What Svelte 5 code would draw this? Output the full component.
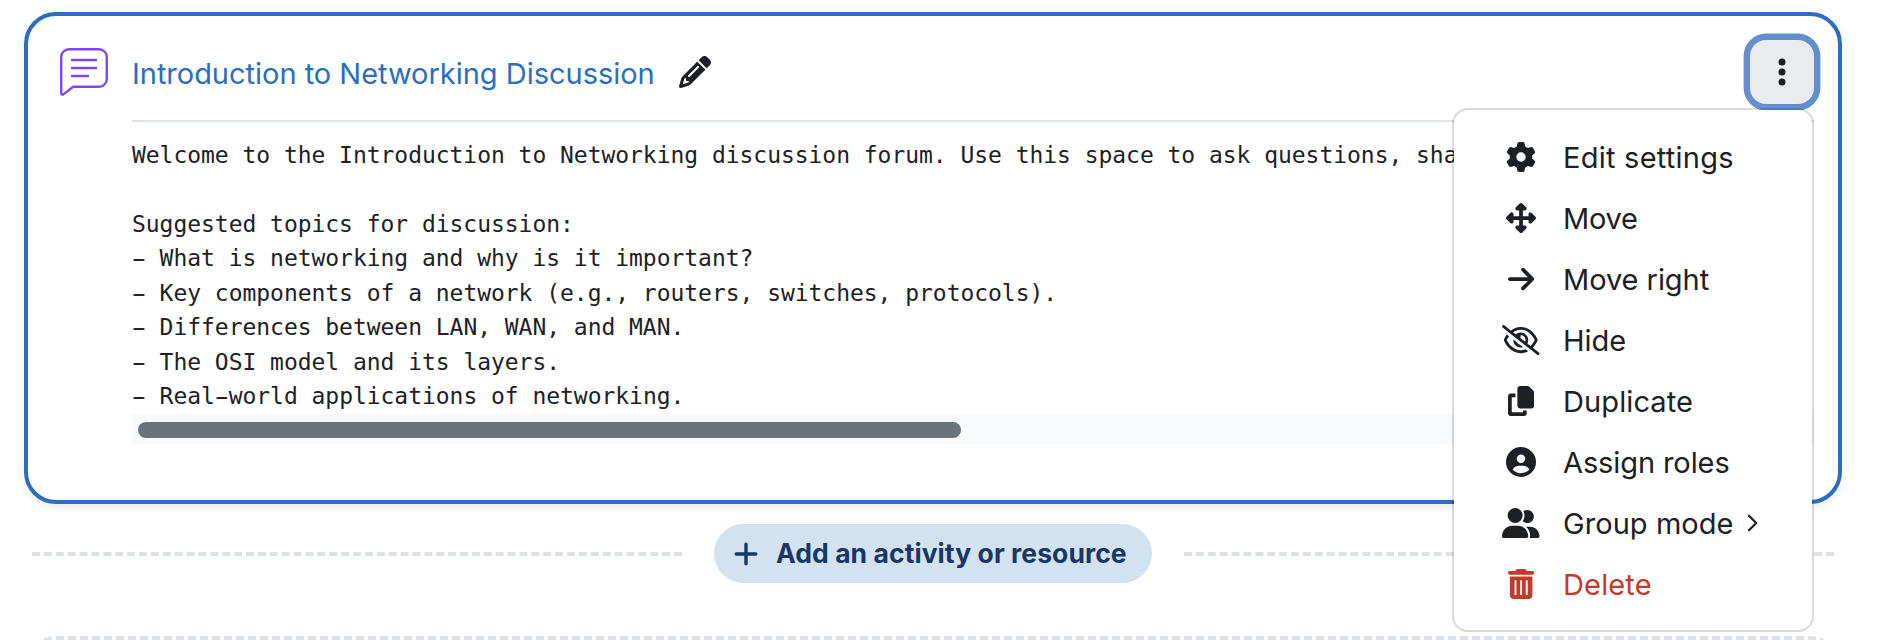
<script>
  const items = [
    { label: 'Edit settings', w: 512, track: 0.25, d: 'M495.9 166.6c3.2 8.7 .5 18.4-6.4 24.6l-43.3 39.4c1.1 8.3 1.7 16.8 1.7 25.4s-.6 17.1-1.7 25.4l43.3 39.4c6.9 6.2 9.6 15.9 6.4 24.6c-4.4 11.9-9.7 23.3-15.8 34.3l-4.7 8.1c-6.6 11-14 21.4-22.1 31.2c-5.9 7.2-15.7 9.6-24.5 6.8l-55.7-17.7c-13.4 10.3-28.2 18.9-44 25.4l-12.5 57.1c-2 9.1-9 16.3-18.2 17.8c-13.8 2.3-28 3.5-42.5 3.5s-28.7-1.2-42.5-3.5c-9.2-1.5-16.2-8.7-18.2-17.8l-12.5-57.1c-15.8-6.5-30.6-15.1-44-25.4L83.1 425.9c-8.8 2.8-18.6 .3-24.5-6.8c-8.1-9.8-15.5-20.2-22.1-31.2l-4.7-8.1c-6.1-11-11.4-22.4-15.8-34.3c-3.2-8.7-.5-18.4 6.4-24.6l43.3-39.4C64.6 273.1 64 264.6 64 256s.6-17.1 1.7-25.4L22.4 191.2c-6.9-6.2-9.6-15.9-6.4-24.6c4.4-11.9 9.7-23.3 15.8-34.3l4.7-8.1c6.6-11 14-21.4 22.1-31.2c5.9-7.2 15.7-9.6 24.5-6.8l55.7 17.7c13.4-10.3 28.2-18.9 44-25.4l12.5-57.1c2-9.1 9-16.3 18.2-17.8C227.3 1.2 241.5 0 256 0s28.7 1.2 42.5 3.5c9.2 1.5 16.2 8.7 18.2 17.8l12.5 57.1c15.8 6.5 30.6 15.1 44 25.4l55.7-17.7c8.8-2.8 18.6-.3 24.5 6.8c8.1 9.8 15.5 20.2 22.1 31.2l4.7 8.1c6.1 11 11.4 22.4 15.8 34.3zM256 336a80 80 0 1 0 0-160 80 80 0 1 0 0 160z' },
    { label: 'Move', w: 512, track: -0.25, d: 'M278.6 9.4c-12.5-12.5-32.8-12.5-45.3 0l-64 64c-9.2 9.2-11.9 22.9-6.9 34.9s16.6 19.8 29.6 19.8h32v96H128V192c0-12.9-7.8-24.6-19.8-29.6s-25.7-2.2-34.9 6.9l-64 64c-12.5 12.5-12.5 32.8 0 45.3l64 64c9.2 9.2 22.9 11.9 34.9 6.9s19.8-16.6 19.8-29.6V288h96v96H192c-12.9 0-24.6 7.8-29.6 19.8s-2.2 25.7 6.9 34.9l64 64c12.5 12.5 32.8 12.5 45.3 0l64-64c9.2-9.2 11.9-22.9 6.9-34.9s-16.6-19.8-29.6-19.8H288V288h96v32c0 12.9 7.8 24.6 19.8 29.6s25.7 2.2 34.9-6.9l64-64c12.5-12.5 12.5-32.8 0-45.3l-64-64c-9.2-9.2-22.9-11.9-34.9-6.9s-19.8 16.6-19.8 29.6v32H288V128h32c12.9 0 24.6-7.8 29.6-19.8s2.2-25.7-6.9-34.9l-64-64z' },
    { label: 'Move right', w: 448, track: -0.05, d: 'M438.6 278.6c12.5-12.5 12.5-32.8 0-45.3l-160-160c-12.5-12.5-32.8-12.5-45.3 0s-12.5 32.8 0 45.3L338.8 224 32 224c-17.7 0-32 14.3-32 32s14.3 32 32 32l306.7 0L233.4 393.4c-12.5 12.5-12.5 32.8 0 45.3s32.8 12.5 45.3 0l160-160z' },
    { label: 'Hide', w: 640, track: 0, d: 'M38.8 5.1C28.4-3.1 13.3-1.2 5.1 9.2S-1.2 34.7 9.2 42.9l592 464c10.4 8.2 25.5 6.3 33.7-4.1s6.3-25.5-4.1-33.7L525.6 386.7c39.6-40.6 66.4-86.1 79.9-118.4c3.3-7.9 3.3-16.7 0-24.6c-14.9-35.7-46.2-87.7-93-131.1C465.5 68.8 400.8 32 320 32c-68.2 0-125 26.3-169.3 60.8L38.8 5.1zm151 118.3C226 97.7 269.5 80 320 80c65.2 0 118.8 29.6 159.9 67.7C518.4 183.5 545 226 558.6 256c-12.6 28-36.6 66.8-70.9 100.9l-53.8-42.2c9.1-17.6 14.2-37.5 14.2-58.7c0-70.7-57.3-128-128-128c-32.2 0-61.7 11.9-84.2 31.5l-46.1-36.1zM394.9 284.2l-81.5-63.9c4.2-8.5 6.6-18.2 6.6-28.3c0-5.5-.7-10.9-2-16c.7 0 1.3 0 2 0c44.2 0 80 35.8 80 80c0 9.9-1.8 19.4-5.1 28.2zm9.4 130.3C378.8 425.4 350.7 432 320 432c-65.2 0-118.8-29.6-159.9-67.7C121.6 328.5 95 286 81.4 256c8.3-18.4 21.5-41.5 39.4-64.8L83.1 161.5C60.3 191.2 44 220.8 34.5 243.7c-3.3 7.9-3.3 16.7 0 24.6c14.9 35.7 46.2 87.7 93 131.1C174.5 443.2 239.2 480 320 480c47.8 0 89.9-12.9 126.2-32.5l-41.9-33zM192 256c0 70.7 57.3 128 128 128c13.3 0 26.1-2 38.2-5.8L302 334c-23.5-5.4-43.1-21.2-53.7-42.3l-56.1-44.2c-.2 2.8-.3 5.6-.3 8.5z' },
    { label: 'Duplicate', w: 448, track: 0.1, d: 'M208 0L332.1 0c12.7 0 24.9 5.1 33.9 14.1l67.9 67.9c9 9 14.1 21.2 14.1 33.9L448 336c0 26.5-21.5 48-48 48l-192 0c-26.5 0-48-21.5-48-48l0-288c0-26.5 21.5-48 48-48zM48 128l80 0 0 64-64 0 0 256 192 0 0-32 64 0 0 48c0 26.5-21.5 48-48 48L48 512c-26.5 0-48-21.5-48-48L0 176c0-26.5 21.5-48 48-48z' },
    { label: 'Assign roles', w: 512, track: -0.1, d: 'M399 384.2C376.9 345.8 335.4 320 288 320H224c-47.4 0-88.9 25.8-111 64.2c35.2 39.2 86.2 63.8 143 63.8s107.8-24.7 143-63.8zM0 256a256 256 0 1 1 512 0A256 256 0 1 1 0 256zm256 16a72 72 0 1 0 0-144 72 72 0 1 0 0 144z' },
    { label: 'Group mode', w: 640, track: 0.06, sub: true, d: 'M96 128a128 128 0 1 1 256 0A128 128 0 1 1 96 128zM0 482.3C0 383.8 79.8 304 178.3 304h91.4C368.2 304 448 383.8 448 482.3c0 16.4-13.3 29.7-29.7 29.7H29.7C13.3 512 0 498.7 0 482.3zM609.3 512H471.4c5.4-9.4 8.6-20.3 8.6-32v-8c0-60.7-27.1-115.2-69.8-151.8c2.4-.1 4.7-.2 7.1-.2h61.4C567.8 320 640 392.2 640 481.3c0 17-13.8 30.7-30.7 30.7zM432 256c-31 0-59-12.6-79.3-32.9C372.4 196.5 384 163.6 384 128c0-26.8-6.6-52.1-18.3-74.3C384.3 40.1 407.2 32 432 32c61.9 0 112 50.1 112 112s-50.1 112-112 112z' },
    { label: 'Delete', w: 448, track: 0.15, danger: true, d: 'M135.2 17.7C140.6 6.8 151.7 0 163.8 0H284.2c12.1 0 23.2 6.8 28.6 17.7L320 32h96c17.7 0 32 14.3 32 32s-14.3 32-32 32H32C14.3 96 0 81.7 0 64S14.3 32 32 32h96l7.2-14.3zM32 128H416V448c0 35.3-28.7 64-64 64H96c-35.3 0-64-28.7-64-64V128zm96 64c-8.8 0-16 7.2-16 16V432c0 8.8 7.2 16 16 16s16-7.2 16-16V208c0-8.8-7.2-16-16-16zm96 0c-8.8 0-16 7.2-16 16V432c0 8.8 7.2 16 16 16s16-7.2 16-16V208c0-8.8-7.2-16-16-16zm96 0c-8.8 0-16 7.2-16 16V432c0 8.8 7.2 16 16 16s16-7.2 16-16V208c0-8.8-7.2-16-16-16z' },
  ];

  const lines = [
    'Welcome to the Introduction to Networking discussion forum. Use this space to ask questions, share',
    '',
    'Suggested topics for discussion:',
    '- What is networking and why is it important?',
    '- Key components of a network (e.g., routers, switches, protocols).',
    '- Differences between LAN, WAN, and MAN.',
    '- The OSI model and its layers.',
    '- Real-world applications of networking.',
  ];
</script>

<main class="page">
  <section class="card">
    <header class="head">
      <svg class="forum" viewBox="0 0 48 48" fill="none" stroke="#7b48ff" stroke-width="2.4" stroke-linecap="round" stroke-linejoin="round">
        <path d="M9 1.2H39a7.8 7.8 0 0 1 7.8 7.8V31a7.8 7.8 0 0 1-7.8 7.8H13.2L3.3 46.4A1.4 1.4 0 0 1 1.2 45.3V9A7.8 7.8 0 0 1 9 1.2z" />
        <path d="M12 12H36M12 20H36M12 28H28" />
      </svg>
      <a class="title" href="#discussion">Introduction to Networking Discussion</a>
      <svg class="pencil" viewBox="0 0 512 512"><path d="M410.3 231l11.3-11.3-33.9-33.9-62.1-62.1L291.7 89.8l-11.3 11.3-22.6 22.6L58.6 322.9c-10.4 10.4-18 23.3-22.2 37.4L1 480.7c-2.5 8.4-.2 17.5 6.1 23.7s15.3 8.5 23.7 6.1l120.3-35.4c14.1-4.2 27-11.8 37.4-22.2L387.7 253.7 410.3 231zM160 399.4l-9.1 22.7c-4 3.1-8.5 5.4-13.3 6.9L59.4 452l23-78.1c1.4-4.9 3.8-9.4 6.9-13.3l22.7-9.1v32c0 8.8 7.2 16 16 16h32zM362.7 18.7L348.3 33.2 325.7 55.8 314.3 67.1l33.9 33.9 62.1 62.1 33.9 33.9 11.3-11.3 22.6-22.6 14.5-14.5c25-25 25-65.5 0-90.5L453.3 18.7c-25-25-65.5-25-90.5 0zm-47.4 168l-144 144c-6.2 6.2-16.4 6.2-22.6 0s-6.2-16.4 0-22.6l144-144c6.2-6.2 16.4-6.2 22.6 0s6.2 16.4 0 22.6z" /></svg>
      <div class="actions">
        <button class="kebab" aria-expanded="true">
          <svg viewBox="0 0 128 512"><circle cx="64" cy="96" r="56" /><circle cx="64" cy="256" r="56" /><circle cx="64" cy="416" r="56" /></svg>
        </button>
        <div class="menu">
          {#each items as item}
            <div class="item" class:danger={item.danger}>
              <span class="slot"><svg viewBox="0 0 {item.w} 512" width={(item.w * 30) / 512} height="30"><path d={item.d} /></svg></span>
              <span class="label" style="letter-spacing: {item.track}px">{item.label}</span>
              {#if item.sub}
                <svg class="chevron" viewBox="0 0 12 18" fill="none" stroke="#1d2125" stroke-width="2.3" stroke-linecap="round" stroke-linejoin="round"><path d="M2 1.8L9.2 9L2 16.2" /></svg>
              {/if}
            </div>
          {/each}
        </div>
      </div>
    </header>
    <div class="body">
      <div class="code">
        {#each lines as line}
          <div class="line">{#each line.split(/(-)/) as part}{#if part === '-'}<span class="dash">-</span>{:else}{part}{/if}{/each}</div>
        {/each}
      </div>
      <div class="track"><div class="thumb"></div></div>
    </div>
  </section>

  <div class="divider">
    <span class="rule"></span>
    <button class="add">
      <svg viewBox="0 0 24 24" fill="none" stroke="#183863" stroke-width="3.4" stroke-linecap="round"><path d="M12 2.2V21.8M2.2 12H21.8" /></svg>
      <span>Add an activity or resource</span>
    </button>
    <span class="rule"></span>
  </div>

  <section class="next"></section>
</main>

<style>
  :global(body) {
    background: #fff;
    overflow: hidden;
  }
  .page {
    box-sizing: border-box;
    height: 640px;
    overflow: hidden;
    padding: 12px 38px 0 24px;
    font-family: Inter, sans-serif;
    color: #1d2125;
  }
  .card {
    box-sizing: border-box;
    height: 492px;
    border: 4px solid #2c6dbc;
    border-radius: 32px;
    padding: 24px 24px 0 32px;
    box-shadow: 0 4px 8px rgba(0, 0, 0, 0.075);
  }
  .head {
    display: flex;
    align-items: flex-start;
    height: 80px;
  }
  .forum {
    width: 48px;
    height: 48px;
    margin-top: 8px;
  }
  .title {
    margin: 11px 0 0 24px;
    font-size: 29px;
    line-height: 45px;
    letter-spacing: -0.02px;
    color: #2c6dbc;
    text-decoration: none;
    white-space: nowrap;
    width: 522px;
  }
  .pencil {
    width: 32px;
    height: 32px;
    margin: 16px 0 0 24.5px;
    fill: #1d2125;
  }
  .actions {
    position: relative;
    margin-left: auto;
  }
  .kebab {
    display: flex;
    align-items: center;
    justify-content: center;
    width: 64px;
    height: 64px;
    border: 0;
    padding: 0;
    border-radius: 16px;
    background: #eaebef;
    box-shadow: 0 0 0 6.4px #6190cd;
  }
  .kebab svg {
    width: 8px;
    height: 32px;
    fill: #1d2125;
  }
  .menu {
    position: absolute;
    top: 68px;
    right: 0;
    z-index: 2;
    box-sizing: border-box;
    width: 362px;
    height: 524px;
    padding: 16px 0;
    border: 2px solid rgba(0, 0, 0, 0.15);
    border-radius: 16px;
    background: #fff;
    background-clip: padding-box;
  }
  .item {
    display: flex;
    align-items: center;
    height: 61px;
    padding-left: 48px;
    font-size: 29px;
    white-space: nowrap;
    fill: currentColor;
  }
  .danger {
    color: #c03b29;
  }
  .slot {
    display: flex;
    justify-content: center;
    width: 38px;
    margin-right: 23px;
  }
  .slot svg {
    flex: none;
  }
  .label {
    padding-top: 2px;
  }
  .chevron {
    width: 12px;
    height: 18px;
    margin: 0 0 0 13px;
  }
  .body {
    margin-left: 72px;
    border-top: 2px solid #dee2e6;
    padding-top: 15.8px;
  }
  .code {
    height: 276.2px;
    overflow: hidden;
    font-family: 'DejaVu Sans Mono', monospace;
    font-size: 23px;
    letter-spacing: -0.04px;
  }
  .line {
    height: 34.5px;
    line-height: 34.5px;
    white-space: pre;
  }
  .dash {
    text-shadow: 2.4px 0 currentColor, -2.4px 0 currentColor;
  }
  .track {
    height: 30px;
    background: #f8f9fa;
    display: flex;
    align-items: center;
    padding-left: 6px;
  }
  .thumb {
    width: 823px;
    height: 16px;
    margin-top: 2px;
    border-radius: 8px;
    background: #6a737b;
  }
  .divider {
    display: flex;
    align-items: center;
    margin-top: 20px;
    padding: 0 8px;
    height: 59px;
  }
  .rule {
    flex: 1;
    border-top: 4px dashed #dee2e6;
  }
  .add {
    box-sizing: border-box;
    display: flex;
    align-items: center;
    width: 438px;
    height: 59px;
    margin: 0 32px;
    padding: 0 0 0 20px;
    border: 0;
    border-radius: 30px;
    background: #d2e2f1;
    color: #183863;
    font: 700 26.5px/40px Inter, sans-serif;
    letter-spacing: 0.07px;
    white-space: nowrap;
  }
  .add svg {
    width: 24px;
    height: 24px;
    margin-right: 18px;
  }
  .add span {
    padding-bottom: 1px;
  }
  .next {
    box-sizing: border-box;
    height: 100px;
    margin-top: 53px;
    border: 4px dashed #dee2e6;
    border-radius: 32px;
  }
</style>
